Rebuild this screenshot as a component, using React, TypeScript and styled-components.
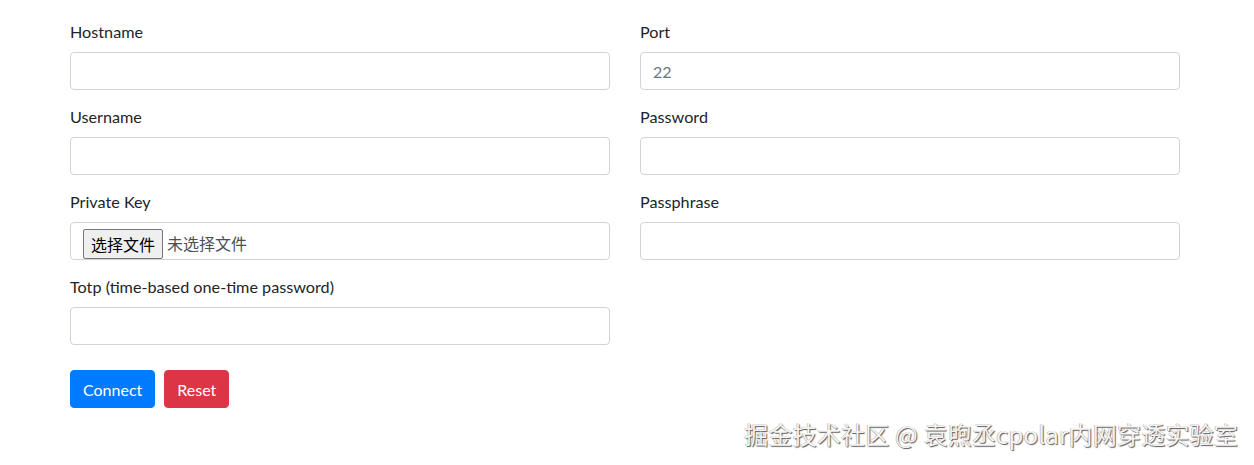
import styled, { createGlobalStyle } from "styled-components";

const GlobalStyle = createGlobalStyle`
  html, body {
    margin: 0;
    padding: 0;
    background: #fff;
  }
  body {
    font-family: Lato, "Noto Sans CJK SC", sans-serif;
    font-size: 16px;
    line-height: 1.5;
    color: #212529;
  }
  * { box-sizing: border-box; }
`;

const Page = styled.div`
  position: relative;
  width: 1254px;
  height: 465px;
  overflow: hidden;
`;

const Form = styled.form`
  width: 1110px;
  margin-left: 70px;
  padding-top: 20px;
`;

const Grid = styled.div`
  display: grid;
  grid-template-columns: 540px 540px;
  column-gap: 30px;
  row-gap: 15px;
`;

const Group = styled.div`
  display: flex;
  flex-direction: column;
`;

const Label = styled.label`
  display: block;
  margin-bottom: 8px;
  line-height: 24px;
  font-size: 16.2px;
`;

const Input = styled.input`
  display: block;
  width: 100%;
  height: 38px;
  padding: 6px 12px;
  font-family: inherit;
  font-size: 16px;
  color: #495057;
  background: #fff;
  border: 1px solid #ced4da;
  border-radius: 4px;
  outline: none;
  &::placeholder {
    color: #6c757d;
  }
`;

const FileBox = styled.label`
  display: flex;
  align-items: flex-start;
  gap: 4px;
  height: 38px;
  padding: 0 12px;
  border: 1px solid #ced4da;
  border-radius: 4px;
  font-family: "Noto Sans CJK SC", sans-serif;
  font-size: 16px;
  line-height: 30px;
  color: #495057;
  input { display: none; }
`;

const FileButton = styled.span`
  display: inline-flex;
  align-items: center;
  height: 30px;
  margin-top: 6px;
  padding: 0 7px;
  background: #efefef;
  border: 1px solid #767676;
  border-radius: 2px;
  color: #000;
`;

const FileName = styled.span`
  margin-top: 5px;
`;

const Actions = styled.div`
  display: flex;
  gap: 9px;
  margin-top: 25px;
`;

const Button = styled.button<{ $variant: "primary" | "danger" }>`
  height: 38px;
  padding: 0 12px;
  font-family: inherit;
  font-size: 16px;
  color: #fff;
  border: 1px solid ${(p) => (p.$variant === "primary" ? "#007bff" : "#dc3545")};
  background: ${(p) => (p.$variant === "primary" ? "#007bff" : "#dc3545")};
  border-radius: 4px;
  cursor: pointer;
`;

const Watermark = styled.div`
  position: absolute;
  right: 16px;
  top: 418px;
  font-family: "Noto Sans CJK SC", sans-serif;
  font-size: 24px;
  letter-spacing: 0.2px;
  line-height: 32px;
  color: #f4f4f4;
  text-shadow: 1px 1px 1px #5a5a5a, -0.5px -0.5px 0 #aaa;
  white-space: nowrap;
`;

export default function App() {
  return (
    <Page>
      <GlobalStyle />
      <Form onSubmit={(e) => e.preventDefault()}>
        <Grid>
          <Group>
            <Label htmlFor="hostname">Hostname</Label>
            <Input id="hostname" type="text" />
          </Group>
          <Group>
            <Label htmlFor="port">Port</Label>
            <Input id="port" type="number" placeholder="22" />
          </Group>
          <Group>
            <Label htmlFor="username">Username</Label>
            <Input id="username" type="text" />
          </Group>
          <Group>
            <Label htmlFor="password">Password</Label>
            <Input id="password" type="password" />
          </Group>
          <Group>
            <Label as="div">Private Key</Label>
            <FileBox>
              <FileButton>选择文件</FileButton>
              <FileName>未选择文件</FileName>
              <input type="file" />
            </FileBox>
          </Group>
          <Group>
            <Label htmlFor="passphrase">Passphrase</Label>
            <Input id="passphrase" type="password" />
          </Group>
          <Group>
            <Label htmlFor="totp">Totp (time-based one-time password)</Label>
            <Input id="totp" type="text" />
          </Group>
        </Grid>
        <Actions>
          <Button type="submit" $variant="primary">Connect</Button>
          <Button type="reset" $variant="danger">Reset</Button>
        </Actions>
      </Form>
      <Watermark>掘金技术社区 @ 袁煦丞cpolar内网穿透实验室</Watermark>
    </Page>
  );
}
